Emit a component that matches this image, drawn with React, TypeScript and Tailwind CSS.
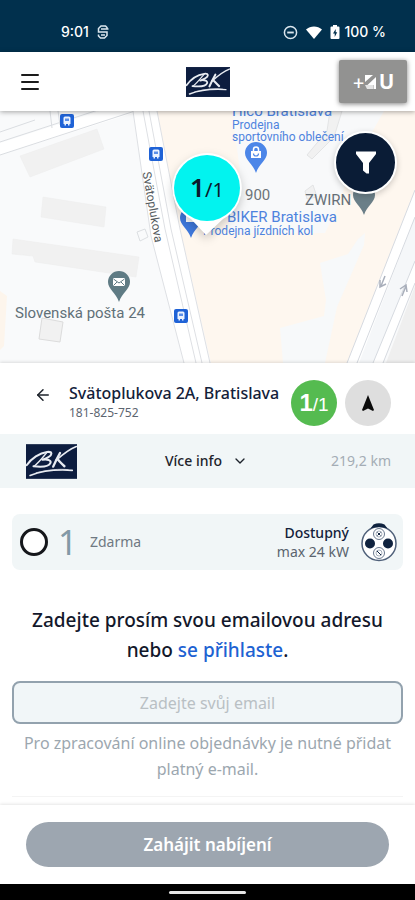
import { useState } from 'react'
import { clsx } from 'clsx'
import { ArrowLeft, ChevronDown, Menu } from 'lucide-react'

function BrandLogo({ className }: { className?: string }) {
  return (
    <svg viewBox="0 0 150 102" className={className} role="img" aria-label="Brand logo">
      <rect width="150" height="102" fill="#0d1d3f" />
      <g fill="none" stroke="#e9ecf2" strokeLinecap="round" strokeLinejoin="round">
        <path d="M2 62C16 42 40 26 62 23c16-2 16 8 4 15-6 4-12 6-18 8 14-3 27 1 24 9-4 10-24 13-50 10" strokeWidth="6" />
        <path d="M62 24C50 38 40 52 24 65" strokeWidth="4" />
        <path d="M100 26C92 40 86 52 80 66" strokeWidth="7" />
        <path d="M148 7C124 16 106 32 88 48" strokeWidth="5" />
        <path d="M93 45c6 6 12 13 20 20" strokeWidth="7" />
        <path d="M12 92C48 78 92 74 136 77" strokeWidth="5" />
        <path d="M30 84C66 75 98 72 124 75" strokeWidth="2" />
      </g>
    </svg>
  )
}

function StatusBar() {
  return (
    <div className="flex h-[52px] items-center justify-between bg-[#01304d] pt-3 pr-[29px] pl-[61px] font-['Inter'] text-sm font-medium text-white">
      <div className="flex items-center gap-2">
        <span>9:01</span>
        <svg viewBox="0 0 12 14" className="h-3.5 w-3" fill="none" stroke="#dbe6ee" strokeWidth="1.500">
          <path d="M10 4V2.500L8.500 1H4L1.500 3.500V7H10V10.500L7.500 13H3.500L1.500 11V9.500" />
          <path d="M4 4h7.500M4 10h4" />
        </svg>
      </div>
      <div className="flex items-center gap-1">
        <svg viewBox="0 0 16 16" className="mr-1 size-[15px]" fill="none" stroke="#dbe6ee" strokeWidth="1.600">
          <circle cx="8" cy="8" r="6.500" />
          <path d="M4.500 8h7" strokeWidth="2" />
        </svg>
        <svg viewBox="0 0 16 13" className="h-[13px] w-4" fill="currentColor">
          <path d="M0 3.500C4.500-.6 11.500-.6 16 3.500L8 13z" />
        </svg>
        <svg viewBox="0 0 10 14" className="ml-1 h-3.5 w-2.5">
          <path d="M3 0h4v1.500h1.500A1 1 0 0 1 9.500 2.500v10.500a1 1 0 0 1-1 1h-7a1 1 0 0 1-1-1V2.500a1 1 0 0 1 1-1H3z" fill="#fff" />
          <path d="M5.700 4L3 8.500h1.700V12L7.200 7.300H5.700z" fill="#01304d" />
        </svg>
        <span>100 %</span>
      </div>
    </div>
  )
}

function Header() {
  return (
    <header className="relative z-20 grid h-[59px] grid-cols-[1fr_auto_1fr] items-center bg-white pr-2 pl-2 shadow-[0_1px_5px_rgba(0,0,0,0.35)]">
      <button type="button" aria-label="Menu" className="ml-2.5 justify-self-start">
        <Menu className="size-6 text-[#1b1b1b]" strokeWidth={2} />
      </button>
      <BrandLogo className="h-[30px] w-11" />
      <button
        type="button"
        aria-label="+4U"
        className="flex h-[43px] w-[68px] items-center justify-center justify-self-end rounded-xs bg-[#929291] font-['Inter'] text-xl font-bold text-white shadow-[0_1px_5px_rgba(0,0,0,0.5)]"
      >
        <span className="font-normal">+</span>
        <svg viewBox="0 0 12 14" className="mr-0.5 h-3.5 w-3">
          <path d="M0 0h8L0 7zM11 2v12H8.500V10H2.500z" fill="#fff" />
          <path d="M0 10h8v4H2z" fill="#e4e4e4" />
        </svg>
        <span>U</span>
      </button>
    </header>
  )
}

function BusStop({ className }: { className: string }) {
  return (
    <svg viewBox="0 0 14 14" className={clsx('absolute size-3.5', className)}>
      <rect width="14" height="14" rx="2" fill="#1f62d6" />
      <path d="M3.500 4a1.500 1.500 0 0 1 1.500-1.500h4A1.500 1.500 0 0 1 10.500 4v6h-1v1.500H8V10H6v1.500H4.500V10h-1z" fill="#eaf2ff" />
      <path d="M5 4.500h4V7H5z" fill="#5b8fe8" />
    </svg>
  )
}

function MapPin({ className, color, children }: { className: string; color: string; children?: React.ReactNode }) {
  return (
    <svg viewBox="0 0 22 31" className={clsx('absolute h-[31px] w-[22px]', className)}>
      <path d="M11 0a11 11 0 0 1 11 11c0 7-8 11-11 20C8 22 0 18 0 11A11 11 0 0 1 11 0z" fill={color} />
      {children}
    </svg>
  )
}

function StationMap() {
  return (
    <section aria-label="Map" className="relative h-[252px] overflow-hidden bg-[#f8fafb] font-['Roboto']">
      <svg viewBox="0 0 415 252" preserveAspectRatio="xMinYMin slice" className="absolute inset-0 size-full" aria-hidden="true">
        <rect width="415" height="252" fill="#f9fafb" />
        {/* areas */}
        <path d="M0 180l7 5-3 50-4 4z" fill="#fdf5ec" />
        <path d="M157 0H415V79L347 252H211L180 118z" fill="#fef7ef" />
        <path d="M232 0H384L350 60 338 95 325 122H232L222 90 240 60z" fill="#f8f9fa" />
        <path d="M358 128l7-6-1 12-27 62-12 56h-42l-3-35 44-12 2-16-6-37 28-9z" fill="#f7f9fa" />
        <path d="M415 175L386 252h29z" fill="#efefef" />
        {/* buildings */}
        <g fill="#f1f1f1" stroke="#ececec" strokeWidth="0.500">
          <path d="M20 45L97 18l7 20L30 66zM43 86l63 10-2 20-63-10zM13 128l126 18-3 20-101-15-2-6-21-2z" />
          <path d="M42 207l21 4-3 20-21-3z" stroke="#dcdcdc" strokeWidth="1" />
          <path d="M330 0h12l-8 26-22 22-5-4 20-24zM305 80l8-6 4 12-10 2z" stroke="#e3e4e5" strokeWidth="1" />
          <path d="M137 121l8-3 3 8-8 4z" fill="none" stroke="#dcdfe2" strokeWidth="1" />
        </g>
        {/* streets */}
        <path d="M0 32L100 0h40L0 44z" fill="#fff" />
        <path d="M0 31L98-1M0 44L138-1M0 21l35-12M50 0l2 17M58 0l2 14" fill="none" stroke="#dadde1" />
        <path d="M133 0l18 125 33 127h26L180 118 157 0z" fill="#fff" />
        <path d="M133 0l18 125 33 127M143 0l22 118 31 134M149 0l22 118 31 134M157 0l23 118 30 134" fill="none" stroke="#dee0e4" />
        <path d="M415 79L347 252h14l54-138z" fill="#fff" />
        <path d="M415 106L359 252h14l42-102z" fill="#f5f7f9" />
        <path d="M415 150L373 252h10l32-80z" fill="#fff" />
        <path d="M415 79L347 252M415 106L357 252M415 150L373 252M415 172L383 252" fill="none" stroke="#d6dae0" />
        <path d="M385 165l-4 10m-1-6l0 7 6-3M402 185l4-10m-6 3l6-4 1 7" fill="none" stroke="#a9afbb" strokeWidth="1.500" />
      </svg>

      <BusStop className="top-[3px] left-[60px]" />
      <BusStop className="top-9 left-[149px]" />
      <BusStop className="top-[198px] left-[174px]" />

      <span className="absolute top-[90px] left-[117px] rotate-80 text-xs leading-3 text-[#555b60]">Svätoplukova</span>

      <div className="absolute -top-2 left-[232px] text-xs leading-3 text-[#4e83de]">
        <p className="text-[15px] leading-4">Hico Bratislava</p>
        <p>Prodejna</p>
        <p>sportovního oblečení</p>
      </div>
      <MapPin className="top-[31px] left-[245px]" color="#4c86e8">
        <path d="M8.500 9V7.500a2.500 2.500 0 0 1 5 0V9" fill="none" stroke="#fff" strokeWidth="1.500" />
        <path d="M6 9h10v7H6z" fill="#fff" />
        <path d="M8.500 11.500a2.500 2.500 0 0 0 5 0" fill="none" stroke="#4c86e8" strokeWidth="1.200" />
      </MapPin>
      <span className="absolute top-[76px] left-[245px] text-[15px] leading-4 text-[#6c7379]">900</span>
      <span className="absolute top-[81px] left-[305px] text-[15px] leading-4 text-[#666f77]">ZWIRN</span>
      <MapPin className="top-[73px] left-[353px]" color="#6b7f88" />

      <MapPin className="top-24 left-[180px]" color="#3f78dc">
        <path d="M6 8h10v7H6z" fill="#fff" />
      </MapPin>
      <div className="absolute top-[98px] left-[203px] text-xs leading-3 text-[#4e83de]">
        <p className="pl-6 text-[15px] leading-4">BIKER Bratislava</p>
        <p>Prodejna jízdních kol</p>
      </div>

      <MapPin className="top-40 left-[108px]" color="#5f7b84">
        <rect x="5" y="7" width="12" height="8" rx="1" fill="#fff" />
        <path d="M5.500 8l5.500 4 5.500-4M5.500 14.500l3.500-3.500M16.500 14.500l-3.500-3.500" fill="none" stroke="#5f7b84" />
      </MapPin>
      <span className="absolute top-[194px] left-[15px] text-[15px] leading-4 text-[#617078]">Slovenská pošta 24</span>

      <button type="button" className="absolute top-[42px] left-[172px] h-[84px] w-[70px]">
        <svg viewBox="0 0 70 84" className="absolute inset-0 size-full overflow-visible drop-shadow-[0_4px_5px_rgba(0,0,0,0.2)]">
          <path d="M35 0a35 35 0 0 1 16 66L34 82 19 66A35 35 0 0 1 35 0z" fill="#fff" />
          <circle cx="35" cy="35" r="33" fill="#02f3ef" />
        </svg>
        <span className="absolute inset-x-0 top-0 h-[68px] font-['Noto_Sans'] text-[20px] leading-[68px] text-[#0c1a2b]">
          <b className="text-[26px] font-semibold">1</b>/1
        </span>
      </button>

      <button
        type="button"
        aria-label="Filter"
        className="absolute top-5 right-[18px] flex size-[63px] items-center justify-center rounded-full border-2 border-white bg-[#0a1c36] shadow-[0_2px_6px_rgba(0,0,0,0.2)]"
      >
        <svg viewBox="0 0 22 24" className="h-6 w-[22px]" fill="#fff">
          <path d="M1 0.500h20v2.500L14 12v10.500h-2.500L8 19.500V12L1 3z" />
        </svg>
      </button>
    </section>
  )
}

function StationHeader() {
  return (
    <div className="flex h-[71px] items-center gap-2 pt-2 pr-6 pl-[34px]">
      <button type="button" aria-label="Back" className="mb-4">
        <ArrowLeft className="size-[18px] text-[#1d232b]" strokeWidth={2} />
      </button>
      <div className="min-w-0 flex-1 pb-1 pl-[9px]">
        <h1 className="text-base leading-6 font-medium whitespace-nowrap text-[#13213a]">Svätoplukova 2A, Bratislava</h1>
        <p className="text-xs leading-4 text-[#5c6570]">181-825-752</p>
      </div>
      <div className="flex size-[46px] shrink-0 items-baseline justify-center rounded-full bg-[#55bb50] font-['Liberation_Sans'] text-[19px] leading-[46px] text-white">
        <b className="text-2xl leading-[46px]">1</b>/1
      </div>
      <button type="button" aria-label="Navigate" className="flex size-[46px] shrink-0 items-center justify-center rounded-full bg-[#dedede]">
        <svg viewBox="0 0 12 16" className="h-4 w-3" fill="#0b0b0b">
          <path d="M6 0l6 15-1 1-5-2.500L1 16l-1-1z" />
        </svg>
      </button>
    </div>
  )
}

function PlugIcon() {
  return (
    <svg viewBox="0 0 36 40" className="h-10 w-9" aria-hidden="true">
      <circle cx="18" cy="21.500" r="17" fill="#fff" stroke="#50617a" strokeWidth="1.500" />
      <path d="M9.500 6.500L12.500 2.500Q18 0 23.500 2.500l3 4Q18 3.500 9.500 6.500z" fill="#10233f" />
      <circle cx="9" cy="21.500" r="5" fill="#10233f" />
      <circle cx="27" cy="21.500" r="5" fill="#10233f" />
      <g fill="#fff" stroke="#6b7a8f">
        <circle cx="18" cy="12" r="5.500" />
        <circle cx="18" cy="31" r="5.500" />
        <circle cx="18" cy="12" r="3" strokeWidth="0.600" />
        <circle cx="18" cy="31" r="3" strokeWidth="0.600" />
      </g>
      <path d="M16.500 10.500l3 3M19.500 10.500l-3 3M16 29l4 4" stroke="#10233f" />
    </svg>
  )
}

function Connector({ checked, onSelect }: { checked: boolean; onSelect: () => void }) {
  return (
    <label className="mx-3 flex h-14 items-center rounded-lg bg-[#f1f6f7] pr-1.5 pl-2">
      <input
        type="radio"
        name="connector"
        checked={checked}
        onChange={onSelect}
        className="size-7 shrink-0 appearance-none rounded-full border-3 border-[#15171b] bg-white checked:bg-[#15171b]"
      />
      <span className="ml-2.5 w-6 text-[34px] leading-10 text-[#8299a6]">1</span>
      <span className="ml-2 flex-1 text-sm text-[#6f7982]">Zdarma</span>
      <span className="mr-3 text-right text-sm leading-[19px]">
        <span className="block font-medium text-[#13213a]">Dostupný</span>
        <span className="block text-[#5a646e]">max 24 kW</span>
      </span>
      <PlugIcon />
    </label>
  )
}

export default function App() {
  const [selected, setSelected] = useState(false)
  const [email, setEmail] = useState('')

  return (
    <div className="flex min-h-screen flex-col bg-white font-['Noto_Sans',sans-serif]">
      <StatusBar />
      <Header />
      <StationMap />

      <main className="relative z-10 flex-1 bg-white shadow-[0_-1px_3px_rgba(0,0,0,0.12)]">
        <StationHeader />

        <div className="grid h-[54px] grid-cols-3 items-center bg-[#f1f6f7] pr-6 pl-[26px] text-sm">
          <BrandLogo className="h-[35px] w-[51px]" />
          <button type="button" className="flex items-center gap-2.5 justify-self-center pr-1 font-medium text-[#1d232b]">
            Více info
            <ChevronDown className="size-4" strokeWidth={2} />
          </button>
          <span className="justify-self-end text-[#a4adb5]">219,2 km</span>
        </div>

        <div className="pt-[26px]">
          <Connector checked={selected} onSelect={() => setSelected(true)} />
        </div>

        <form id="charge-form" className="mx-3 border-b border-[#f4f4f4] pt-[35px] pb-3.5 text-center" onSubmit={e => e.preventDefault()}>
          <label htmlFor="email" className="block text-[19px] leading-[30px] font-medium text-[#13182b]">
            Zadejte prosím svou emailovou adresu nebo{' '}
            <a href="#login" className="text-[#1d62d2]">se přihlaste</a>.
          </label>
          <input
            id="email"
            type="email"
            value={email}
            onChange={e => setEmail(e.target.value)}
            placeholder="Zadejte svůj email"
            className="mt-4 block h-[43px] w-full rounded-lg border-2 border-[#93a2ae] bg-[#f1f6f8] text-center text-base text-[#13182b] placeholder:text-[#b9c0c4]"
          />
          <p className="mt-1.5 text-base leading-[26px] text-[#9ca7af]">
            Pro zpracování online objednávky je nutné přidat platný e-mail.
          </p>
        </form>
      </main>

      <footer className="relative z-10 bg-white px-[26px] pt-[17px] pb-[17px] shadow-[0_-1px_3px_rgba(0,0,0,0.1)]">
        <button type="submit" form="charge-form" className="block h-[45px] w-full rounded-full bg-[#9da6b0] text-[17px] font-semibold text-white">
          Zahájit nabíjení
        </button>
      </footer>
      <div className="flex h-4 items-center justify-center bg-black">
        <div className="h-[3px] w-[77px] rounded-full bg-[#e6e6e6]" />
      </div>
    </div>
  )
}
